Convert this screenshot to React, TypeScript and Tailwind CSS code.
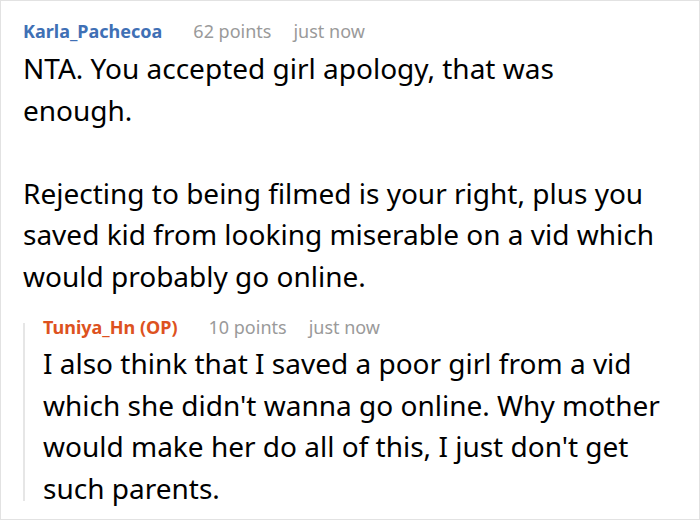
const Meta = ({ name, color, points }: { name: string; color: string; points: number }) => (
  <div className="flex items-center h-6 text-[18px] leading-6 whitespace-nowrap">
    <span className={`font-bold ${color}`}>{name}</span>
    <span className="ml-[31px] text-[#9a9a9a]">{points} points</span>
    <span className="ml-[22px] text-[#9a9a9a]">just now</span>
  </div>
);

export default function App() {
  return (
    <div
      className="w-[700px] h-[520px] border border-[#e2e2e2] bg-white overflow-hidden text-black"
      style={{ fontFamily: '"Noto Sans", "Open Sans", sans-serif' }}
    >
      <div className="pl-[22px] pr-2 pt-[18px]">
        <Meta name="Karla_Pachecoa" color="text-[#3f70b5]" points={62} />
        <div className="mt-[5px] text-[28px] leading-[41.5px] whitespace-nowrap">
          <p>
            NTA. You accepted girl apology, that was
            <br />
            enough.
          </p>
          <p className="mt-[41.5px]">
            Rejecting to being filmed is your right, plus you
            <br />
            saved kid from looking miserable on a vid which
            <br />
            would probably go online.
          </p>
        </div>

        <div className="mt-[18px] flex">
          <div className="w-[2px] bg-[#e6e6e6] mt-[8px] mb-[8px]" />
          <div className="pl-[18px] flex-1">
            <Meta name="Tuniya_Hn (OP)" color="text-[#dd5220]" points={10} />
            <p className="mt-[4px] text-[28px] leading-[41.5px] whitespace-nowrap">
              I also think that I saved a poor girl from a vid
              <br />
              which she didn't wanna go online. Why mother
              <br />
              would make her do all of this, I just don't get
              <br />
              such parents.
            </p>
          </div>
        </div>
      </div>
    </div>
  );
}
